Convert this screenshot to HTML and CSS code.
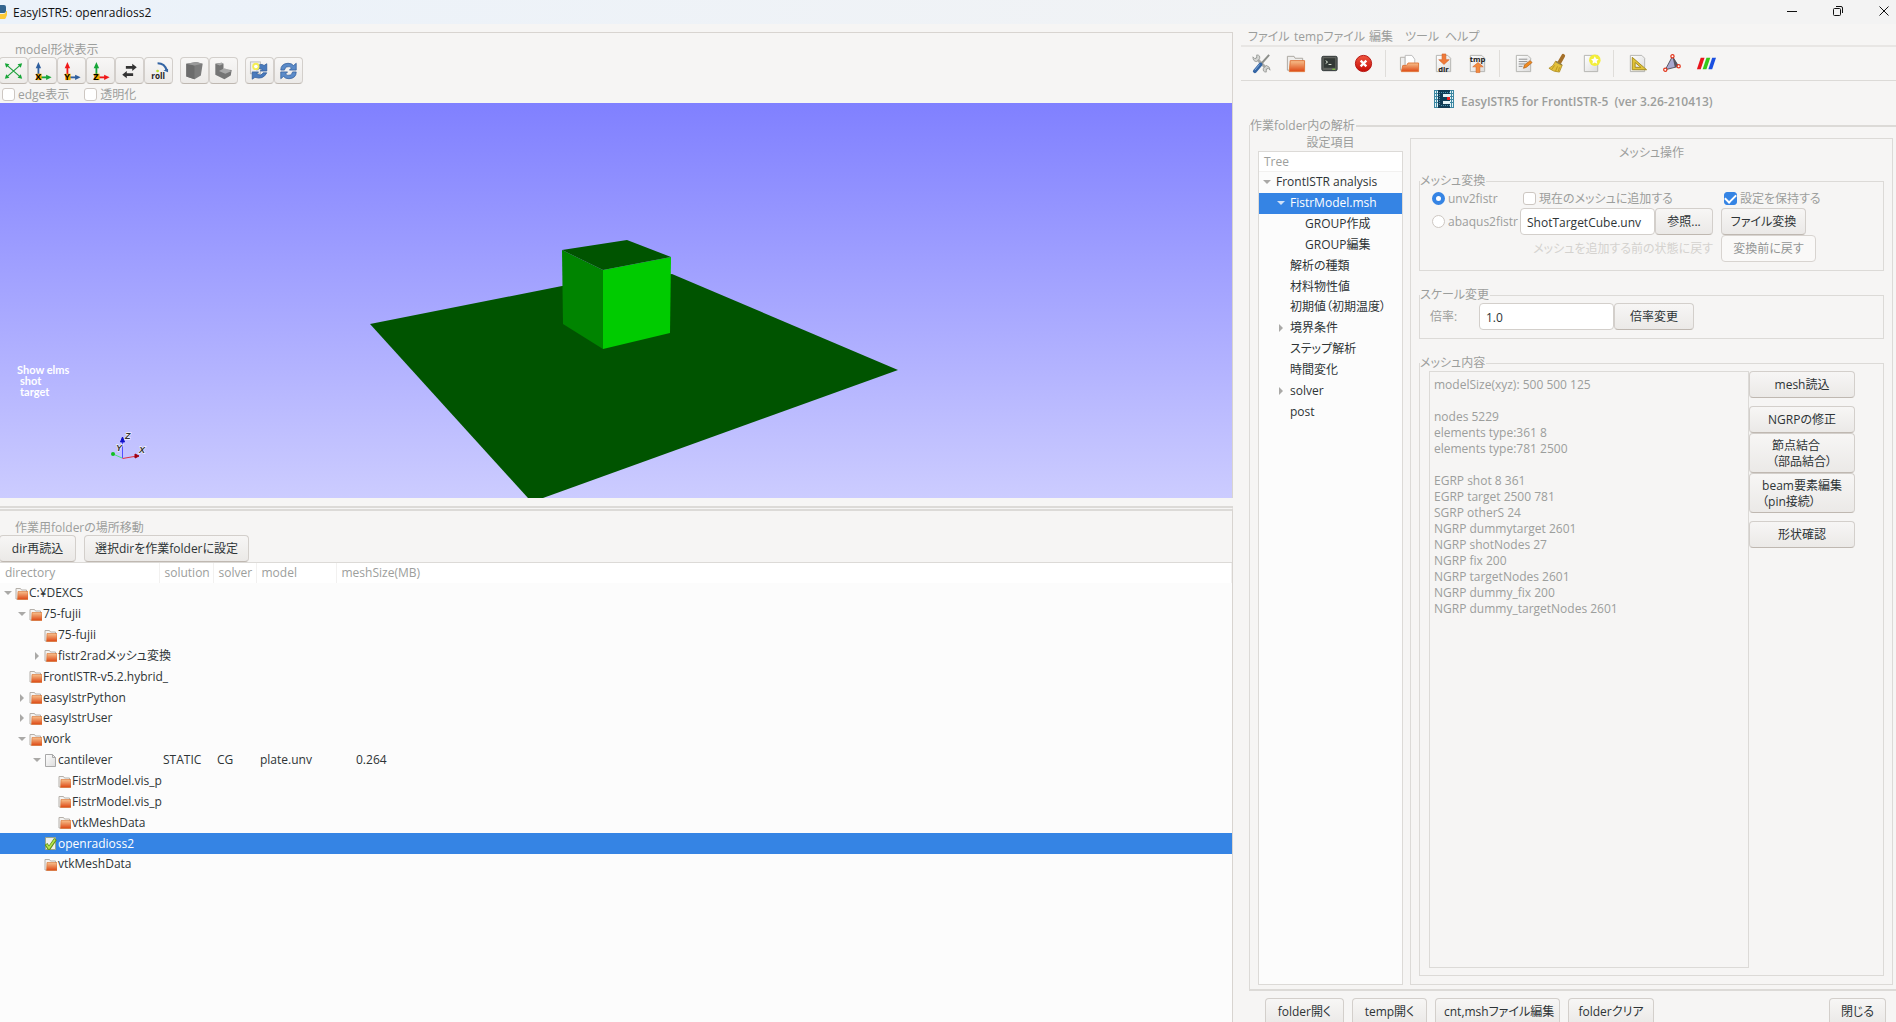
FILE: index.html
```html
<!DOCTYPE html>
<html lang="ja">
<head>
<meta charset="utf-8">
<title>EasyISTR5: openradioss2</title>
<link rel="stylesheet" href="styles.css">
</head>
<body>
<svg class="defs" aria-hidden="true">
  <defs>
    <linearGradient id="gOrange" x1="0" y1="0" x2="0" y2="1"><stop offset="0" stop-color="#f7c08c"/><stop offset="1" stop-color="#dd4814"/></linearGradient>
    <linearGradient id="gPaper" x1="0" y1="0" x2="1" y2="1"><stop offset="0" stop-color="#ffffff"/><stop offset="1" stop-color="#dcdcdc"/></linearGradient>
    <linearGradient id="gRed" x1="0" y1="0" x2="0" y2="1"><stop offset="0" stop-color="#f0563f"/><stop offset="1" stop-color="#c60c06"/></linearGradient>
    <linearGradient id="gSky" x1="0" y1="0" x2="0" y2="1"><stop offset="0" stop-color="#8080ff"/><stop offset="1" stop-color="#ccccff"/></linearGradient>
    <symbol id="folder" viewBox="0 0 13 13"><path d="M1 12V1.500h4.500l1 1.500H11.500V12z" fill="#f4f3f1" stroke="#b5b0aa"/><path d="M2.500 12.500L3 4.500h10v8z" fill="url(#gOrange)" stroke="#d8702f" stroke-width=".6"/></symbol>
    <symbol id="file" viewBox="0 0 13 13"><path d="M1.500.5h7l3 3v9h-10z" fill="url(#gPaper)" stroke="#a9a9a9"/><path d="M8.500.5v3h3" fill="none" stroke="#a9a9a9"/></symbol>
    <symbol id="filecheck" viewBox="0 0 13 13"><path d="M1.500.5h10v12h-10z" fill="#eef0ea" stroke="#9aa58c"/><path d="M2 7l3 4.500L11.500 2" fill="none" stroke="#5d8f1b" stroke-width="3.400"/><path d="M2.500 7.500L5 11l6-8.500" fill="none" stroke="#b6e34a" stroke-width="1.600"/></symbol>
    <symbol id="open" viewBox="0 0 8 8"><path d="M0 2h8L4 6z" fill="currentColor"/></symbol>
    <symbol id="shut" viewBox="0 0 8 8"><path d="M2 0v8l4-4z" fill="currentColor"/></symbol>
    <symbol id="page" viewBox="0 0 22 22"><path d="M3.500 2.500h12l3 3v14h-15z" fill="url(#gPaper)" stroke="#b3b3b0"/></symbol>
  </defs>
</svg>

<header class="titlebar">
  <svg class="app-icon" width="7" height="14" viewBox="0 0 7 14"><path d="M0 0h4q2 0 2 2v4q0 2-2 2H0z" fill="#33658f"/><path d="M0 14h5q1-1 2-4V6H6q0 3-3 3H0z" fill="#fccb3a"/></svg>
  <h1>EasyISTR5: openradioss2</h1>
  <div class="win-buttons">
    <button aria-label="最小化"><svg width="12" height="12" viewBox="0 0 12 12"><path d="M1 6.500h10" stroke="#111"/></svg></button>
    <button aria-label="元に戻す"><svg width="12" height="12" viewBox="0 0 12 12" fill="none" stroke="#111"><rect x="1.500" y="3.500" width="7" height="7" rx="1"/><path d="M4 1.500h5q1.500 0 1.500 1.500v5"/></svg></button>
    <button aria-label="閉じる"><svg width="12" height="12" viewBox="0 0 12 12"><path d="M1.500 1.500l9 9M10.500 1.500l-9 9" stroke="#111"/></svg></button>
  </div>
</header>

<main class="window">
  <div class="left">
    <section class="model-pane">
      <h2 class="caption">model形状表示</h2>
      <div class="view-tools">
        <button aria-label="全体表示"><svg viewBox="0 0 22 22"><g stroke="#1fa03c" stroke-width="1.300" fill="#16a637"><path d="M3 4l16 14M19 4L3 18"/><path d="M1.500 2.500l5 1-3.500 4zM20.500 2.500l-5 1 3.500 4zM1.500 19.500l5-1-3.500-4zM20.500 19.500l-5-1 3.500-4z" stroke="none"/></g></svg></button>
        <button aria-label="X方向"><svg viewBox="0 0 22 22"><path d="M6.500 19V6" stroke="#2f5f9e" stroke-width="2"/><path d="M6.500 1l3 7h-6z" fill="#2f5f9e"/><path d="M8 18h8" stroke="#16a637" stroke-width="2"/><path d="M21 18l-6-3v6z" fill="#16a637"/><rect x="4" y="14" width="6" height="7" fill="#f5a800"/><text x="3" y="21" class="axis">X</text></svg></button>
        <button aria-label="Y方向"><svg viewBox="0 0 22 22"><path d="M6.500 19V6" stroke="#f01818" stroke-width="2"/><path d="M6.500 1l3 7h-6z" fill="#f01818"/><path d="M8 18h8" stroke="#2f5f9e" stroke-width="2"/><path d="M21 18l-6-3v6z" fill="#2f5f9e"/><rect x="4" y="14" width="6" height="7" fill="#f5a800"/><text x="3" y="21" class="axis">Y</text></svg></button>
        <button aria-label="Z方向"><svg viewBox="0 0 22 22"><path d="M6.500 19V6" stroke="#16a637" stroke-width="2"/><path d="M6.500 1l3 7h-6z" fill="#16a637"/><path d="M8 18h8" stroke="#f01818" stroke-width="2"/><path d="M21 18l-6-3v6z" fill="#f01818"/><rect x="4" y="14" width="6" height="7" fill="#f5a800"/><text x="3" y="21" class="axis">Z</text></svg></button>
        <button aria-label="反転"><svg viewBox="0 0 22 22" fill="#333"><path d="M7 5.500h7V3l5 4-5 4V8.500H7zM15 13.500H8V11l-5 4 5 4v-2.500h7z"/></svg></button>
        <button aria-label="回転"><svg viewBox="0 0 22 22"><path d="M10 2.500q8 0 10 8" fill="none" stroke="#3465a4" stroke-width="2.400"/><path d="M21.500 8.500v4l-5-2z" fill="#3465a4"/><circle cx="10" cy="11" r="1.500" fill="#b9dc26"/><text x="3" y="20" class="roll">roll</text></svg></button>
        <button class="group" aria-label="立体表示"><svg viewBox="0 0 22 22"><path d="M2 3l11-2 7 2-2 13-7 4-9-3z" fill="#7c7c7c"/><path d="M2 3l9 2v15l-9-3z" fill="#6c6c6c"/><path d="M2 3l11-2 7 2-9 2z" fill="#9a9a9a"/></svg></button>
        <button aria-label="部分表示"><svg viewBox="0 0 22 22"><path d="M2 3l7-1 2 1v6l9 1-1 6-7 4-10-5z" fill="#757575"/><path d="M2 3l7-1 2 1-4 2zM6 11l6-3 8 3-7 3z" fill="#a9a9a9"/></svg></button>
        <button class="group" aria-label="新規更新"><svg viewBox="0 0 22 22"><rect x="1" y="1" width="11" height="13" fill="#eee" stroke="#bbb"/><path d="M8 6q5-4 8-1l3-2v8h-7l2-2q-3-2-6 1zM3 20v-8h7l-2 2q5 3 7-1h4q-4 8-13 5z" fill="#4a7bbd" stroke="#2c5898" stroke-width=".8"/><circle cx="7" cy="6" r="4" fill="#f5ee54"/><circle cx="7" cy="6" r="2" fill="#fff"/></svg></button>
        <button aria-label="更新"><svg viewBox="0 0 22 22" fill="#5b8bc9" stroke="#2c5898" stroke-width=".8"><path d="M2.500 10q0-7 8-7.500 4 0 6 2.500l3-2.500V10H12l2.500-2.500Q12 5.500 9 6.500 7 7.500 6.500 10zM19.500 12q0 7-8 7.500-4 0-6-2.500l-3 2.500V12H10l-2.500 2.500q2.500 2 5.500 1 2-1 2.500-3.500z"/></svg></button>
      </div>
      <div class="view-options">
        <label><input type="checkbox">edge表示</label>
        <label><input type="checkbox">透明化</label>
      </div>
      <svg class="viewport" viewBox="0 0 1232 395" preserveAspectRatio="xMidYMid slice" role="img" aria-label="3Dモデル">
        <rect width="1232" height="395" fill="url(#gSky)"/>
        <path d="M370 221L562 183L672 171L898 267L543 395H528z" fill="#005400"/>
        <path d="M562 147L603 167V246L563 221z" fill="#008400"/>
        <path d="M603 167L671 154L670 230L603 246z" fill="#00cb00"/>
        <path d="M562 147L627 137L671 154L603 167z" fill="#005400"/>
        <g class="overlay"><text x="17" y="271">Show elms</text><text x="20" y="282">shot</text><text x="20" y="293">target</text></g>
        <path d="M122.500 355V338" stroke="#5050ff"/><path d="M122.500 334l2 5h-4z" fill="#1010c8" stroke="#1010c8"/>
        <path d="M122.500 355.500L137 353" stroke="#e03040"/><path d="M135 351l4 2-4 2z" fill="#a00010" stroke="#a00010"/>
        <path d="M122 355l-9-4" stroke="#50e080"/><circle cx="113" cy="351" r="2" fill="#10c020"/>
        <g class="triad"><text x="125" y="336">Z</text><text x="116" y="348">Y</text><text x="139" y="350">X</text></g>
      </svg>
    </section>

    <section class="folder-pane">
      <h2 class="caption">作業用folderの場所移動</h2>
      <div class="folder-tools">
        <button class="btn reload">dir再読込</button>
        <button class="btn choose">選択dirを作業folderに設定</button>
      </div>
      <div class="dir-list">
        <table>
          <colgroup><col class="c-dir"><col class="c-sol"><col class="c-solver"><col class="c-model"><col></colgroup>
          <thead><tr><th>directory</th><th>solution</th><th>solver</th><th>model</th><th>meshSize(MB)</th></tr></thead>
          <tbody>
            <tr><td class="l0"><div><svg class="arrow"><use href="#open"/></svg><svg class="ico"><use href="#folder"/></svg>C:¥DEXCS</div></td><td></td><td></td><td></td><td></td></tr>
            <tr><td class="l1"><div><svg class="arrow"><use href="#open"/></svg><svg class="ico"><use href="#folder"/></svg>75-fujii</div></td><td></td><td></td><td></td><td></td></tr>
            <tr><td class="l2"><div><svg class="arrow"></svg><svg class="ico"><use href="#folder"/></svg>75-fujii</div></td><td></td><td></td><td></td><td></td></tr>
            <tr><td class="l2"><div><svg class="arrow"><use href="#shut"/></svg><svg class="ico"><use href="#folder"/></svg>fistr2radメッシュ変換</div></td><td></td><td></td><td></td><td></td></tr>
            <tr><td class="l1"><div><svg class="arrow"></svg><svg class="ico"><use href="#folder"/></svg>FrontISTR-v5.2.hybrid_</div></td><td></td><td></td><td></td><td></td></tr>
            <tr><td class="l1"><div><svg class="arrow"><use href="#shut"/></svg><svg class="ico"><use href="#folder"/></svg>easyIstrPython</div></td><td></td><td></td><td></td><td></td></tr>
            <tr><td class="l1"><div><svg class="arrow"><use href="#shut"/></svg><svg class="ico"><use href="#folder"/></svg>easyIstrUser</div></td><td></td><td></td><td></td><td></td></tr>
            <tr><td class="l1"><div><svg class="arrow"><use href="#open"/></svg><svg class="ico"><use href="#folder"/></svg>work</div></td><td></td><td></td><td></td><td></td></tr>
            <tr><td class="l2"><div><svg class="arrow"><use href="#open"/></svg><svg class="ico"><use href="#file"/></svg>cantilever</div></td><td>STATIC</td><td>CG</td><td>plate.unv</td><td class="size">0.264</td></tr>
            <tr><td class="l3"><div><svg class="arrow"></svg><svg class="ico"><use href="#folder"/></svg>FistrModel.vis_p</div></td><td></td><td></td><td></td><td></td></tr>
            <tr><td class="l3"><div><svg class="arrow"></svg><svg class="ico"><use href="#folder"/></svg>FistrModel.vis_p</div></td><td></td><td></td><td></td><td></td></tr>
            <tr><td class="l3"><div><svg class="arrow"></svg><svg class="ico"><use href="#folder"/></svg>vtkMeshData</div></td><td></td><td></td><td></td><td></td></tr>
            <tr class="selected"><td class="l2"><div><svg class="arrow"></svg><svg class="ico"><use href="#filecheck"/></svg>openradioss2</div></td><td></td><td></td><td></td><td></td></tr>
            <tr><td class="l2"><div><svg class="arrow"></svg><svg class="ico"><use href="#folder"/></svg>vtkMeshData</div></td><td></td><td></td><td></td><td></td></tr>
          </tbody>
        </table>
      </div>
    </section>
  </div>

  <div class="right">
    <nav class="menu"><a href="#file">ファイル</a><a href="#temp">tempファイル</a><a href="#edit">編集</a><a href="#tool">ツール</a><a href="#help">ヘルプ</a></nav>
    <div class="toolbar">
      <button aria-label="設定"><svg viewBox="0 0 22 22"><path d="M5 5l12 12" stroke="#a9aaa8" stroke-width="3"/><path d="M2 4l2 2 2-1 0-3q4 0 3 4l-3 3q-4 0-4-5zM20 18l-2-2-2 1v3q-4 0-3-4l3-3q4 1 4 5z" fill="#d4d5d3" stroke="#8d8f8b" stroke-width=".8"/><path d="M19 2L11 11" stroke="#8c8e8a" stroke-width="2"/><path d="M10 12l-6 7" stroke="#3465a4" stroke-width="4" stroke-linecap="round"/><path d="M9 12l-5 6" stroke="#86abd9" stroke-width="1"/></svg></button>
      <button aria-label="フォルダ"><svg viewBox="0 0 22 22"><path d="M2.500 18V3.500h7l1 2h8V18z" fill="#eeedeb" stroke="#aaa6a0"/><path d="M4.500 19.500L5.500 8h15v11.500z" fill="url(#gOrange)" stroke="#e0763a"/></svg></button>
      <button aria-label="端末"><svg viewBox="0 0 22 22"><rect x="3" y="3.500" width="16" height="15" rx="1.500" fill="#60635e" stroke="#2e3436"/><rect x="5" y="5.500" width="12" height="10" fill="#333936"/><path d="M7 8l2 1.500L7 11M10 12h3" fill="none" stroke="#e8f0e0"/><path d="M14 17h3" stroke="#8ae234"/></svg></button>
      <button aria-label="終了"><svg viewBox="0 0 22 22"><circle cx="11" cy="11" r="8.500" fill="url(#gRed)" stroke="#b51410"/><path d="M8 8l6 6M14 8l-6 6" stroke="#fff" stroke-width="2.400"/></svg></button>
      <span class="sep"></span>
      <button aria-label="開く"><svg viewBox="0 0 22 22"><path d="M1.500 18V4.500h5V18z" fill="#eee" stroke="#b3b0aa"/><path d="M6.500 15V2.500h7l3 4V15z" fill="#fff" stroke="#bbb"/><path d="M2.500 19.500L4 13h4l1.500-2.500h11v9z" fill="url(#gOrange)" stroke="#e0763a"/></svg></button>
      <button aria-label="dir"><svg viewBox="0 0 22 22"><use href="#page"/><path d="M9.500 1h4v6h3.500L11.500 12 6 7h3.500z" fill="#ef7a3a" stroke="#d45f20" stroke-width=".6"/><text x="11" y="20" class="tag">dir</text></svg></button>
      <button aria-label="tmp"><svg viewBox="0 0 22 22"><use href="#page"/><path d="M9.500 20.500h4v-6H17L11.500 10 6 14.500h3.500z" fill="#f28a3e" stroke="#d45f20" stroke-width=".6"/><text x="11" y="9" class="tag">tmp</text></svg></button>
      <span class="sep"></span>
      <button aria-label="編集"><svg viewBox="0 0 22 22"><use href="#page"/><path d="M6 6.500h9M6 9h9M6 11.500h7M6 14h4" stroke="#8d8d8d"/><path d="M11 16l1-3.500L18 8l2 2-6 5z" fill="#f28a1e" stroke="#a85a10" stroke-width=".7"/></svg></button>
      <button aria-label="クリア"><svg viewBox="0 0 22 22"><path d="M17 3l-4 7" stroke="#a5702a" stroke-width="4" stroke-linecap="round"/><path d="M9 8.500l7 4-3 7.500q-6 0-11-4 5-2 7-7.500z" fill="#e3c03a" stroke="#a8861a" stroke-width=".8"/><path d="M8 13l-3 4M11 14l-2 5M13 15l-1 4" stroke="#b8941c"/><path d="M9.500 9l6 3.500" stroke="#8f7f4a" stroke-width="1.500"/></svg></button>
      <button aria-label="新規"><svg viewBox="0 0 22 22"><path d="M3.500 2.500h14v17h-14z" fill="url(#gPaper)" stroke="#b3b3b0"/><circle cx="14.500" cy="7.500" r="6" fill="#f3ee3a"/><path d="M14.500 3.500l1.300 2.500 2.700.5-2 2 .5 2.800-2.500-1.300-2.500 1.300.5-2.800-2-2 2.700-.5z" fill="#fff"/></svg></button>
      <span class="sep"></span>
      <button aria-label="メッシュ"><svg viewBox="0 0 22 22"><use href="#page"/><path d="M5.500 4.500v13h15z M8.500 10v5h6z" fill="#e2c437" fill-rule="evenodd" stroke="#a48b1e"/></svg></button>
      <button aria-label="要素"><svg viewBox="0 0 22 22"><path d="M12 3.500L4.500 17.500l14-3.500z" fill="#a9a7cf" stroke="#55535e"/><path d="M12 3.500L18.500 14l-4 1z" fill="#55535e"/><g fill="#fff" stroke="#e2361c" stroke-width="1.300"><circle cx="12" cy="3.500" r="1.700"/><circle cx="4.500" cy="17.500" r="1.700"/><circle cx="18.500" cy="14" r="1.700"/></g></svg></button>
      <button aria-label="後処理"><svg viewBox="0 0 22 22"><path d="M6 5h4L6 17H2z" fill="#e8141c"/><path d="M12 5h4l-4 12H8z" fill="#35c81a"/><path d="M18 5h4l-4 12h-4z" fill="#1a4fe0"/></svg></button>
    </div>

    <div class="product">
      <svg width="20" height="18" viewBox="0 0 20 18"><rect width="20" height="18" fill="#e4f3f7"/><path d="M.5 0v18M19.500 0v18M2.500 0v18M17.500 0v18" stroke="#3b87a2"/><path d="M0 .5h20M0 3.500h4M0 6.500h4M0 9.500h4M0 12.500h4M0 17.500h20M16 3.500h4M16 6.500h4M16 9.500h4M16 12.500h4" stroke="#3b87a2"/><path d="M4 0h12v4H9v3h7v4H9v3h7v4H4z" fill="#123c56"/><path d="M7 2.500h9M7 15.500h9M5.500 2v14" stroke="#4f93ad" stroke-dasharray="1 1"/><rect x="13" y="7" width="3" height="3" fill="#f02020"/></svg>
      <h2>EasyISTR5 for FrontISTR-5 &nbsp;(ver 3.26-210413)</h2>
    </div>

    <fieldset class="analysis">
      <legend>作業folder内の解析</legend>
      <div class="items">
        <h3>設定項目</h3>
        <div class="tree">
          <div class="tree-head">Tree</div>
          <ul>
            <li class="t0"><svg class="arrow"><use href="#open"/></svg>FrontISTR analysis</li>
            <li class="t1 selected"><svg class="arrow"><use href="#open"/></svg>FistrModel.msh</li>
            <li class="t2"><svg class="arrow"></svg>GROUP作成</li>
            <li class="t2"><svg class="arrow"></svg>GROUP編集</li>
            <li class="t1"><svg class="arrow"></svg>解析の種類</li>
            <li class="t1"><svg class="arrow"></svg>材料物性値</li>
            <li class="t1"><svg class="arrow"></svg>初期値（初期温度）</li>
            <li class="t1"><svg class="arrow"><use href="#shut"/></svg>境界条件</li>
            <li class="t1"><svg class="arrow"></svg>ステップ解析</li>
            <li class="t1"><svg class="arrow"></svg>時間変化</li>
            <li class="t1"><svg class="arrow"><use href="#shut"/></svg>solver</li>
            <li class="t1"><svg class="arrow"></svg>post</li>
          </ul>
        </div>
      </div>

      <div class="mesh">
        <h3>メッシュ操作</h3>
        <fieldset class="convert">
          <legend>メッシュ変換</legend>
          <div class="convert-grid">
            <label><input type="radio" name="fmt" checked>unv2fistr</label>
            <label class="check"><input type="checkbox">現在のメッシュに追加する</label>
            <label class="check"><input type="checkbox" checked>設定を保持する</label>
            <label><input type="radio" name="fmt">abaqus2fistr</label>
            <div class="file-row"><input type="text" aria-label="メッシュファイル" value="ShotTargetCube.unv"><button class="btn browse">参照...</button></div>
            <button class="btn do-convert">ファイル変換</button>
            <span class="hint">メッシュを追加する前の状態に戻す</span>
            <button class="btn revert" disabled>変換前に戻す</button>
          </div>
        </fieldset>
        <fieldset class="scale">
          <legend>スケール変更</legend>
          <div class="scale-row"><label for="scale">倍率:</label><input type="text" id="scale" value="1.0"><button class="btn">倍率変更</button></div>
        </fieldset>
        <fieldset class="content">
          <legend>メッシュ内容</legend>
          <textarea readonly aria-label="メッシュ内容">modelSize(xyz): 500 500 125

nodes 5229
elements type:361 8
elements type:781 2500

EGRP shot 8 361
EGRP target 2500 781
SGRP otherS 24
NGRP dummytarget 2601
NGRP shotNodes 27
NGRP fix 200
NGRP targetNodes 2601
NGRP dummy_fix 200
NGRP dummy_targetNodes 2601</textarea>
          <div class="content-buttons">
            <button class="btn apart">mesh読込</button>
            <button class="btn">NGRPの修正</button>
            <button class="btn two"><span>節点結合<br>（部品結合）</span></button>
            <button class="btn two apart"><span>beam要素編集<br>（pin接続）</span></button>
            <button class="btn">形状確認</button>
          </div>
        </fieldset>
      </div>
    </fieldset>

    <footer>
      <button class="btn f1">folder開く</button><button class="btn f2">temp開く</button><button class="btn f3">cnt,mshファイル編集</button><button class="btn f4">folderクリア</button><button class="btn close">閉じる</button>
    </footer>
  </div>
</main>
</body>
</html>
```
FILE: styles.css
```css
* { box-sizing: border-box; }

html, body { height: 100%; }

body {
  margin: 0;
  display: flex;
  flex-direction: column;
  overflow: hidden;
  background: #f6f5f4;
  color: #2e3436;
  font-family: "Open Sans", "Noto Sans CJK JP", sans-serif;
  font-size: 12px;
  line-height: 16px;
  font-feature-settings: "palt";
}

.defs { position: absolute; width: 0; height: 0; }

h1, h2, h3, ul { margin: 0; padding: 0; font-size: 12px; font-weight: 400; list-style: none; }
h2, h3, legend, label { color: #9c9e9c; }
button, input, textarea { font: inherit; color: inherit; font-feature-settings: inherit; margin: 0; }
fieldset { --pad: 8px; margin: 0; padding: 0 0 0 var(--pad); border: 1px solid #dcdad7; min-width: 0; }
legend { margin-left: calc(-1 * var(--pad)); padding: 0 1px 0 0; }

/* Title bar */
.titlebar {
  flex: none;
  display: flex;
  align-items: center;
  height: 24px;
  background: linear-gradient(90deg, #ebf2fa, #f3f3f3 90%);
  color: #111;
}
.app-icon { margin-right: 6px; }
.titlebar h1 { flex: 1; padding-top: 1px; }
.win-buttons { display: flex; gap: 34px; padding: 0 6px 2px 0; }
.win-buttons button { display: flex; padding: 0; border: 0; background: none; }

/* Window split */
.window {
  flex: 1;
  min-height: 0;
  display: grid;
  grid-template-columns: minmax(0, 1fr) 663px;
}
.left { display: flex; flex-direction: column; min-height: 0; padding-top: 8px; }
.model-pane { border: 1px solid #d8d4d0; border-width: 1px 1px 0 0; padding-top: 8px; }
.caption { padding: 1px 0 0 15px; margin-bottom: -1px; }

.view-tools { display: flex; margin-left: -1px; }
.view-tools button {
  display: flex;
  width: 29px;
  height: 27px;
  padding: 3px;
  border: 1px solid #d3cfcb;
  border-bottom-color: #bfb8b1;
  border-radius: 4px;
  background: linear-gradient(#f8f7f6, #eceae8);
}
.view-tools button.group { margin-left: 7px; }
.view-tools svg { width: 21px; height: 20px; overflow: visible; }
.axis { font: 700 10px "Open Sans", sans-serif; fill: #000; }
.roll { font: 700 9px "Open Sans", sans-serif; fill: #222; }

.view-options { display: flex; gap: 15px; padding: 2px 0 0 2px; height: 19px; }
label { display: flex; align-items: center; gap: 3px; }

input[type="checkbox"], input[type="radio"] {
  appearance: none;
  flex: none;
  width: 13px;
  height: 13px;
  border: 1px solid #cdc7c2;
  border-radius: 3px;
  background: #fff;
}
input[type="radio"] { border-radius: 50%; }
input[type="radio"]:checked { border: 4px solid #3584e4; }
input[type="checkbox"]:checked {
  border-color: #3584e4;
  background: #3584e4;
  display: grid;
  place-items: center;
}
input[type="checkbox"]:checked::after {
  content: "";
  width: 9px;
  height: 5px;
  margin-top: -3px;
  border: solid #fff;
  border-width: 0 0 2px 2px;
  transform: rotate(-45deg);
}

.viewport { display: block; width: 100%; aspect-ratio: 1232 / 395; }
.overlay { font: 700 11px Lato, sans-serif; fill: #fff; }
.triad { font: italic 700 9px "Liberation Sans", sans-serif; fill: #333; stroke: #fff; stroke-width: 1px; paint-order: stroke; }

/* Folder pane */
.folder-pane {
  flex: 1;
  min-height: 0;
  display: flex;
  flex-direction: column;
  margin-top: 8px;
  padding-top: 8px;
  border-top: 5px double #dcdad7;
  border-right: 1px solid #d8d4d0;
}
.folder-tools { display: flex; gap: 8px; padding-right: 8px; }
.btn {
  flex: none;
  height: 27px;
  padding: 1px 8px 0;
  border: 1px solid #d3cfcb;
  border-bottom-color: #bfb8b1;
  border-radius: 4px;
  background: linear-gradient(#f7f6f5, #ebe9e7);
  white-space: nowrap;
}
.btn:disabled { color: #929595; background: #faf9f8; border-color: #d8d4d0; }
.reload { width: 77px; margin-left: -1px; }
.choose { width: 165px; }

.dir-list { flex: 1; background: #fcfcfc; border-top: 1px solid #dcdad7; overflow: hidden; }
table { width: 100%; height: 312px; table-layout: fixed; border-collapse: collapse; }
.c-dir { width: 159px; }
.c-sol { width: 54px; }
.c-solver { width: 43px; }
.c-model { width: 80px; }
th, td { padding: 0 0 0 4px; text-align: left; font-weight: 400; white-space: nowrap; }
th { height: 20px; padding-left: 5px; background: #fff; color: #9c9e9c; border-right: 1px solid #f2f1f0; }
td { height: 20px; }
td > div { display: flex; align-items: center; }
td.size { padding-left: 20px; }
td.l1 { padding-left: 18px; }
td.l2 { padding-left: 33px; }
td.l3 { padding-left: 47px; }
.arrow { flex: none; width: 8px; height: 8px; color: #aaa9a7; }
.ico { flex: none; width: 13px; height: 13px; margin: 0 1px 0 3px; }
.selected { background: #3584e4; color: #fff; }

/* Right side */
.right { display: flex; flex-direction: column; min-height: 0; padding-left: 8px; }
.menu {
  display: grid;
  grid-template-columns: 46px 75px 36px 40px auto;
  padding: 5px 0 0 7px;
  border-bottom: 2px solid #e8e6e4;
}
.menu a { color: #9c9e9c; text-decoration: none; }
.toolbar { display: flex; align-items: center; height: 34px; padding-left: 3px; border-bottom: 1px solid #dcdad7; }
.toolbar button { display: flex; justify-content: center; width: 34px; padding: 0; border: 0; background: none; }
.toolbar svg { width: 21px; height: 21px; overflow: visible; }
.sep { width: 1px; height: 27px; margin: 0 6px 0 5px; background: #dfddda; }
.tag { font: 700 8px "Open Sans", sans-serif; fill: #222; text-anchor: middle; }

.product { display: flex; gap: 7px; height: 37px; padding: 9px 0 0 193px; }
.product h2 { padding-top: 4px; font-weight: 600; }

.analysis { flex: 1; min-height: 0; display: flex; gap: 7px; margin-left: 8px; padding: 1px 3px 4px var(--pad); border-width: 2px 0 2px 1px; }
.items { flex: none; width: 145px; display: flex; flex-direction: column; }
h3 { text-align: center; }
.tree { flex: 1; border: 1px solid #dcdad7; background: #fcfcfc; }
.tree-head { height: 20px; padding: 2px 0 0 5px; background: #fff; color: #9c9e9c; border-bottom: 1px solid #f2f1f0; }
.tree ul { display: grid; grid-template-rows: repeat(12, 1fr); height: 250px; }
.tree li { display: flex; align-items: center; gap: 5px; padding-left: 4px; white-space: nowrap; }
.tree li.t1 { padding-left: 18px; }
.tree li.t2 { padding-left: 33px; }
.selected .arrow { color: #cfe0f7; }

.mesh { flex: 1; min-width: 0; display: flex; flex-direction: column; gap: 16px; margin-top: 3px; padding: 6px 8px 8px; border: 1px solid #dcdad7; }
.convert { --pad: 12px; margin-top: -4px; padding-bottom: 8px; }
.convert-grid { display: grid; grid-template-columns: 88px 193px auto; grid-template-rows: 19px 27px 27px; justify-content: start; }
.convert-grid > :nth-child(3n) { margin-left: 8px; }
.convert-grid .check { margin-left: 3px; }
.convert-grid .check:nth-child(3) { margin-left: 11px; }
.file-row, .scale-row { display: flex; }
input[type="text"] { width: 135px; height: 27px; padding: 1px 6px 0; border: 1px solid #d3cfcb; border-radius: 4px; background: #fff; }
.browse { width: 58px; }
.do-convert { width: 85px; }
.convert-grid .hint { grid-column: 1 / 3; align-self: center; text-align: right; color: #d4d2cf; }
.convert-grid .revert { width: 95px; margin-left: 8px; }
.scale { --pad: 10px; padding-bottom: 8px; }
.scale-row label { width: 49px; }
.scale-row .btn { width: 80px; }

.content { --pad: 9px; flex: 1; min-height: 0; display: flex; padding-right: 28px; padding-bottom: 7px; }
textarea { flex: 1; min-width: 0; padding: 5px 4px; border: 1px solid #dcdad7; background: transparent; color: #9c9e9c; resize: none; outline: 0; }
.content-buttons { display: flex; flex-direction: column; width: 106px; }
.content-buttons .two { height: 40px; }
.content-buttons .two span { display: inline-block; text-align: left; }
.content-buttons .apart { margin-bottom: 8px; }

footer { flex: none; display: flex; gap: 8px; height: 31px; padding: 7px 10px 0 24px; }
.f1 { width: 79px; }
.f2 { width: 75px; }
.f3 { width: 125px; }
.f4 { width: 86px; }
.close { width: 57px; margin-left: auto; }
```
